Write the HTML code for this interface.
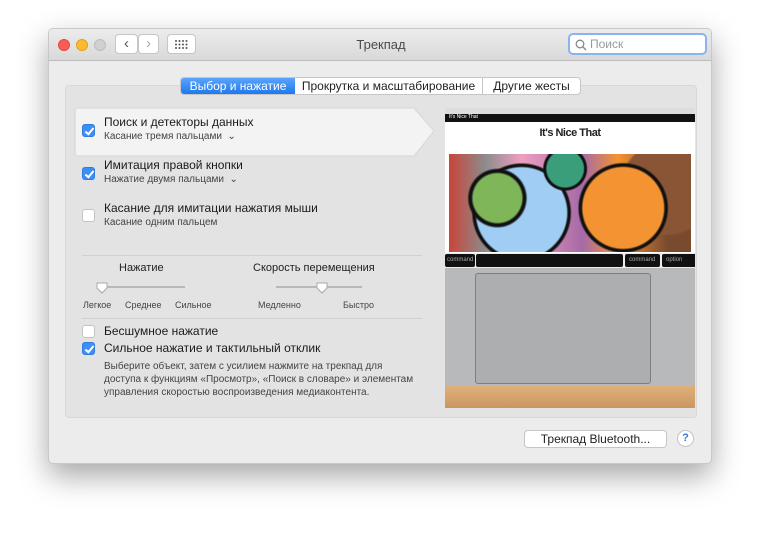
<!DOCTYPE html><html><head><meta charset="utf-8"><style>
*{box-sizing:border-box;margin:0;padding:0}
body{width:760px;height:533px;background:#fff;font-family:"Liberation Sans",sans-serif;position:relative;overflow:hidden;color:#222}
.win{position:absolute;left:48px;top:28px;width:664px;height:436px;background:#ececec;border:1px solid #c8c8c8;border-radius:5px;box-shadow:0 12px 30px rgba(0,0,0,.35);overflow:hidden}
.tb{position:absolute;left:0;top:0;width:100%;height:32px;background:linear-gradient(#ececec,#d9d9d9);border-bottom:1px solid #bdbdbd}
.dot{position:absolute;top:10px;width:12px;height:12px;border-radius:50%}
.btn{position:absolute;background:#fff;border:1px solid #c6c6c6;border-radius:4px}
.a{position:absolute;white-space:nowrap}
.panel{position:absolute;left:16px;top:56px;width:632px;height:333px;background:#e3e3e3;border:1px solid #d8d8d8;border-radius:4px}
.cb{position:absolute;width:13px;height:13px;border-radius:3px;background:#fff;border:1px solid #c4c4c4}
.cb.on{background:#3d8ef5;border-color:#2f7be0}
.cb.on:after{content:"";position:absolute;left:4px;top:1px;width:3px;height:7px;border:solid #fff;border-width:0 2px 2px 0;transform:rotate(40deg)}
.t{font-size:12px;color:#1a1a1a}
.s{font-size:10px;color:#444}
</style></head><body>
<div class="win">
<div class="tb">
<div class="dot" style="left:9px;background:#fc5b57;border:1px solid #de4a44"></div>
<div class="dot" style="left:27px;background:#fdbb2d;border:1px solid #dea123"></div>
<div class="dot" style="left:45px;background:#d0d0d0;border:1px solid #bdbdbd"></div>
<div class="btn" style="left:66px;top:5px;width:23px;height:20px;font-size:15px;color:#555;text-align:center;line-height:17px">‹</div>
<div class="btn" style="left:89px;top:5px;width:21px;height:20px;font-size:15px;color:#aaa;text-align:center;line-height:17px">›</div>
<div class="btn" style="left:118px;top:5px;width:29px;height:20px"><svg width="27" height="18"><g fill="#555"><circle cx="8" cy="6" r="1"/><circle cx="11.5" cy="6" r="1"/><circle cx="15" cy="6" r="1"/><circle cx="18.5" cy="6" r="1"/><circle cx="8" cy="9.5" r="1"/><circle cx="11.5" cy="9.5" r="1"/><circle cx="15" cy="9.5" r="1"/><circle cx="18.5" cy="9.5" r="1"/><circle cx="8" cy="13" r="1"/><circle cx="11.5" cy="13" r="1"/><circle cx="15" cy="13" r="1"/><circle cx="18.5" cy="13" r="1"/></g></svg></div>
<div class="a" style="left:0;width:664px;text-align:center;top:8px;font-size:13px;color:#4a4a4a">Трекпад</div>
<div style="position:absolute;left:519px;top:4px;width:139px;height:22px;background:#fff;border:2px solid #8ab4f0;border-radius:5px;font-size:12px;color:#999;padding:2px 0 0 20px">Поиск</div>
<svg style="position:absolute;left:526px;top:10px" width="12" height="12"><circle cx="5" cy="5" r="3.8" fill="none" stroke="#888" stroke-width="1.3"/><line x1="8" y1="8" x2="11" y2="11" stroke="#888" stroke-width="1.4"/></svg>
</div>
<div class="panel"></div>
<div style="position:absolute;left:131px;top:48px;height:18px;display:flex;font-size:12px;border:1px solid #c6c6c6;border-radius:4px;overflow:hidden;background:#fff">
<div style="width:114px;background:linear-gradient(#5aa4fb,#1e78f0);color:#fff;text-align:center;line-height:16px">Выбор и нажатие</div>
<div style="width:188px;text-align:center;line-height:16px;border-right:1px solid #c6c6c6">Прокрутка и масштабирование</div>
<div style="width:97px;text-align:center;line-height:16px">Другие жесты</div>
</div>
<svg style="position:absolute;left:25px;top:78px" width="362" height="50"><path d="M1 4Q1 1 4 1H340L360 24L340 49H4Q1 49 1 46Z" fill="#f3f3f3" stroke="#d6d6d6"/></svg>
<div class="cb on" style="left:33px;top:95px"></div>
<div class="a t" style="left:55px;top:86px">Поиск и детекторы данных</div>
<div class="a s" style="left:55px;top:102px">Касание тремя пальцами &nbsp;⌄</div>
<div class="cb on" style="left:33px;top:138px"></div>
<div class="a t" style="left:55px;top:129px">Имитация правой кнопки</div>
<div class="a s" style="left:55px;top:145px">Нажатие двумя пальцами &nbsp;⌄</div>
<div class="cb" style="left:33px;top:180px"></div>
<div class="a t" style="left:55px;top:172px">Касание для имитации нажатия мыши</div>
<div class="a s" style="left:55px;top:188px">Касание одним пальцем</div>
<div style="position:absolute;left:33px;top:226px;width:340px;border-top:1px solid #d0d0d0"></div>
<div class="a" style="left:70px;top:233px;font-size:11px">Нажатие</div>
<div class="a" style="left:204px;top:233px;font-size:11px">Скорость перемещения</div>
<div style="position:absolute;left:50px;top:257px;width:86px;height:2px;background:#b8b8b8"></div>
<div style="position:absolute;left:227px;top:257px;width:86px;height:2px;background:#b8b8b8"></div>
<svg style="position:absolute;left:47px;top:253px" width="12" height="12"><path d="M1 1H11V6L6 11L1 6Z" fill="#fff" stroke="#aaa"/></svg>
<svg style="position:absolute;left:267px;top:253px" width="12" height="12"><path d="M1 1H11V6L6 11L1 6Z" fill="#fff" stroke="#aaa"/></svg>
<div class="a s" style="left:34px;top:271px;font-size:9px">Легкое</div>
<div class="a s" style="left:76px;top:271px;font-size:9px">Среднее</div>
<div class="a s" style="left:126px;top:271px;font-size:9px">Сильное</div>
<div class="a s" style="left:209px;top:271px;font-size:9px">Медленно</div>
<div class="a s" style="left:294px;top:271px;font-size:9px">Быстро</div>
<div style="position:absolute;left:33px;top:289px;width:340px;border-top:1px solid #d0d0d0"></div>
<div class="cb" style="left:33px;top:296px"></div>
<div class="a t" style="left:55px;top:295px">Бесшумное нажатие</div>
<div class="cb on" style="left:33px;top:313px"></div>
<div class="a t" style="left:55px;top:312px">Сильное нажатие и тактильный отклик</div>
<div class="a s" style="left:55px;top:331px;line-height:13px">Выберите объект, затем с усилием нажмите на трекпад для<br>доступа к функциям «Просмотр», «Поиск в словаре» и элементам<br>управления скоростью воспроизведения медиаконтента.</div>
<div style="position:absolute;left:396px;top:79px;width:250px;height:300px;overflow:hidden;background:#fff">
<div style="height:6px;background:#ddd"></div>
<div style="height:8px;background:#111;font-size:5px;color:#fff;padding-left:4px">It's Nice That</div>
<div style="height:31px;background:#fff;text-align:center;font-size:11px;font-weight:bold;padding-top:5px;letter-spacing:-.5px">It's Nice That</div>
<div style="position:absolute;left:4px;top:46px;width:242px;height:98px;background:
radial-gradient(circle at 20% 45%,#7fb65a 0 12%,#111 13% 14%,transparent 15%),radial-gradient(circle at 72% 55%,#f49332 0 22%,#111 23% 24%,transparent 25%),radial-gradient(circle at 90% 35%,#8a5535 0 20%,transparent 21%),radial-gradient(circle at 48% 15%,#3a9e7a 0 12%,#111 13% 14%,transparent 15%),radial-gradient(circle at 30% 60%,#9fcdf3 0 25%,#111 26% 27%,transparent 28%),linear-gradient(90deg,#c9453a,#8c8c8c 15%,#ef9fc0 30%,#a56aa7 55%,#f49332 70%,#7a4a2f 90%)"></div>
<div style="position:absolute;left:0;top:145px;width:250px;height:15px;background:#ececec"></div>
<div style="position:absolute;left:0;top:146px;width:30px;height:13px;background:#111;border-radius:2px;font-size:6px;color:#aaa;padding:3px 2px">command</div>
<div style="position:absolute;left:31px;top:146px;width:147px;height:13px;background:#111;border-radius:2px"></div>
<div style="position:absolute;left:180px;top:146px;width:35px;height:13px;background:#111;border-radius:2px;font-size:6px;color:#aaa;padding:3px 4px">command</div>
<div style="position:absolute;left:217px;top:146px;width:40px;height:13px;background:#111;border-radius:2px;font-size:6px;color:#aaa;padding:3px 4px">option</div>
<div style="position:absolute;left:0;top:160px;width:250px;height:118px;background:#b8b9bb"></div>
<div style="position:absolute;left:30px;top:165px;width:176px;height:111px;background:#adaeb0;border:1px solid #7d7e80;border-radius:3px"></div>
<div style="position:absolute;left:0;top:278px;width:250px;height:22px;background:linear-gradient(#e0b07b,#c99660)"></div>
</div>
<div class="btn" style="left:475px;top:401px;width:143px;height:18px;font-size:12px;text-align:center;line-height:16px;border-radius:4px">Трекпад Bluetooth...</div>
<div style="position:absolute;left:628px;top:401px;width:17px;height:17px;border-radius:50%;background:#fff;border:1px solid #c4c4c4;color:#2f7be0;font-size:11px;font-weight:bold;text-align:center;line-height:15px">?</div>
</div>
</body></html>
